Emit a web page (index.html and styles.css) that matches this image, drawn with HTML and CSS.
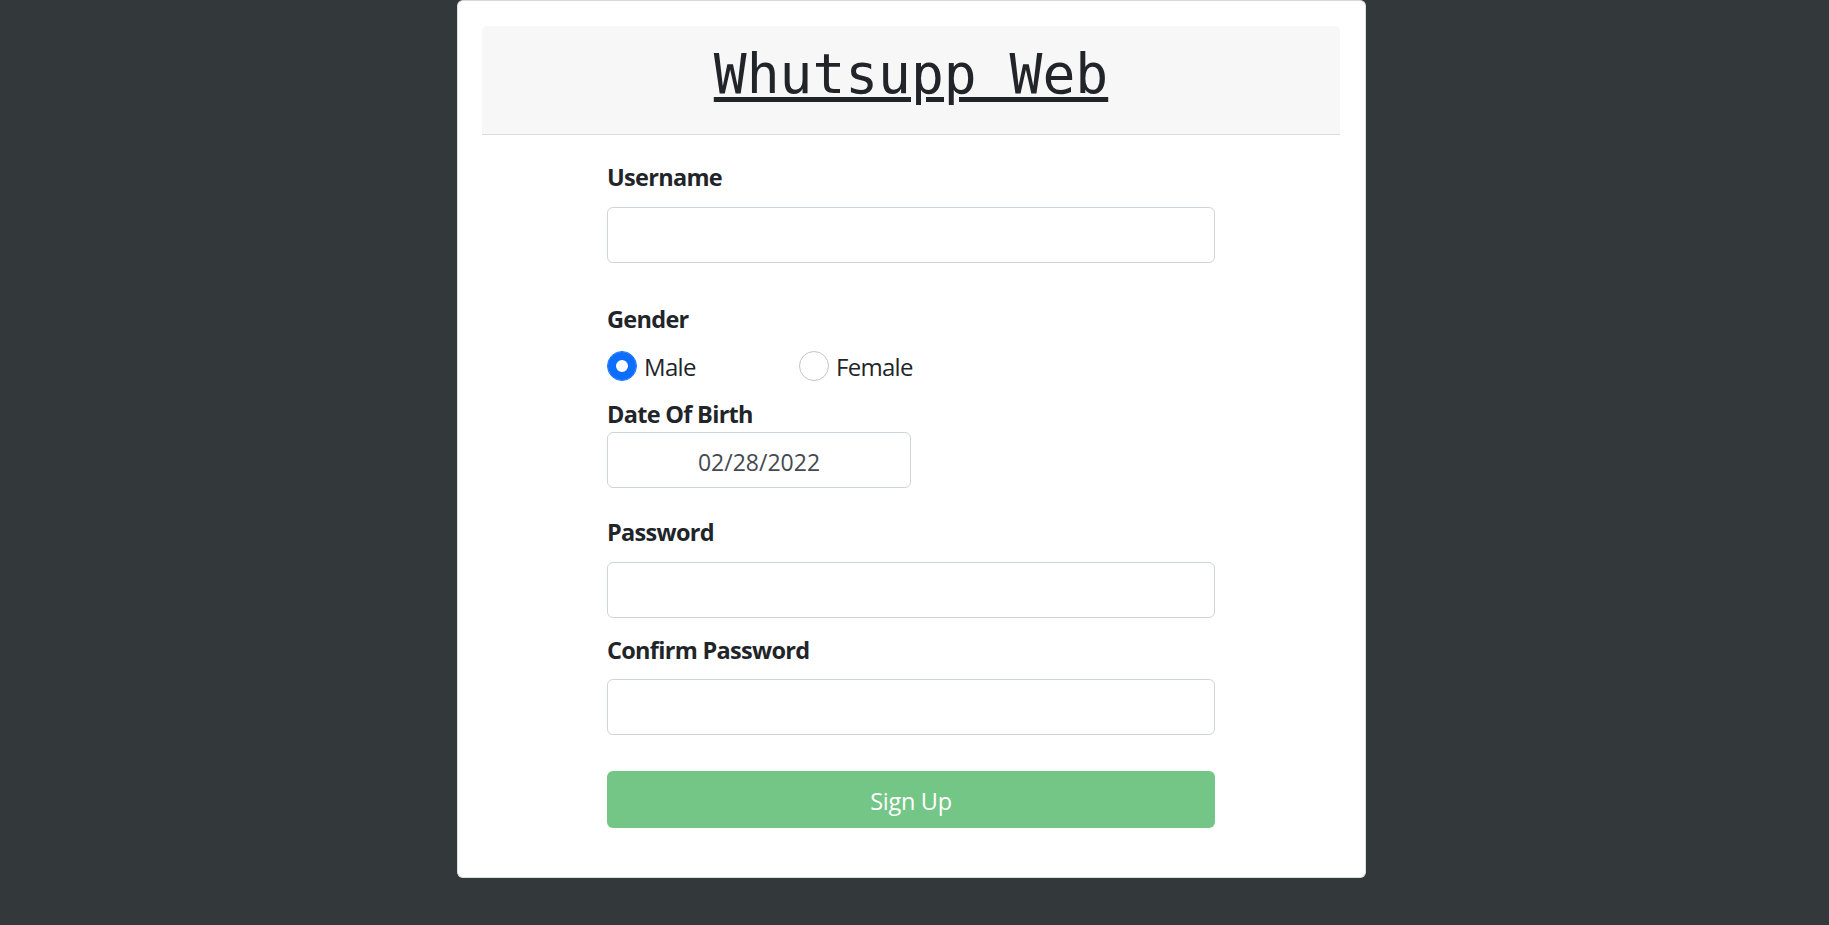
FILE: index.html
```html
<!DOCTYPE html>
<html lang="en">
<head>
<meta charset="utf-8">
<title>Whutsupp Web - Sign Up</title>
<link rel="stylesheet" href="styles.css">
</head>
<body>
<div class="page">
  <div class="card">
    <div class="card-header">
      <h1 class="title">Whutsupp Web</h1>
    </div>
    <form class="form">
      <div class="field field-username">
        <label class="label" for="username">Username</label>
        <input class="input" id="username" type="text">
      </div>
      <div class="field field-gender">
        <div class="label">Gender</div>
        <div class="radios">
          <label class="radio-option radio-male">
            <input class="radio" type="radio" name="gender" checked>
            <span class="radio-text">Male</span>
          </label>
          <label class="radio-option">
            <input class="radio" type="radio" name="gender">
            <span class="radio-text">Female</span>
          </label>
        </div>
      </div>
      <div class="field field-dob">
        <label class="label label-tight" for="dob">Date Of Birth</label>
        <input class="input input-date" id="dob" type="text" value="02/28/2022">
      </div>
      <div class="field field-password">
        <label class="label" for="password">Password</label>
        <input class="input" id="password" type="password">
      </div>
      <div class="field field-confirm">
        <label class="label label-confirm" for="confirm">Confirm Password</label>
        <input class="input" id="confirm" type="password">
      </div>
      <button class="btn-signup" type="button">Sign Up</button>
    </form>
  </div>
</div>
</body>
</html>
```

FILE: styles.css
```css
html, body {
  margin: 0;
  padding: 0;
}

body {
  background: #33383b;
  font-family: "Segoe UI", "Open Sans", "Noto Sans", sans-serif;
  color: #212529;
  min-height: 925px;
}

.page {
  display: flex;
  justify-content: center;
  padding-right: 6px;
}

.card {
  box-sizing: border-box;
  width: 909px;
  background: #ffffff;
  border: 1px solid #dedede;
  border-top-color: #d8d8d8;
  border-radius: 6px;
  padding: 25px 25px 49px 24px;
}

.card-header {
  background: #f7f7f7;
  border-bottom: 1px solid #dcdcdc;
  border-radius: 5px 5px 0 0;
  padding: 15px 0 27px 0;
  text-align: center;
}

.title {
  margin: 0;
  font-family: "DejaVu Sans Mono", "Liberation Mono", monospace;
  font-weight: normal;
  font-size: 54.6px;
  line-height: 66px;
  color: #212529;
  text-decoration: underline;
  text-decoration-thickness: 5px;
  text-underline-offset: 4px;
}

.form {
  width: 608px;
  margin: 0 auto;
  display: flex;
  flex-direction: column;
}

.field {
  display: flex;
  flex-direction: column;
}

.field-username { margin-top: 24px; }
.field-gender { margin-top: 38px; }
.field-dob { margin-top: 12px; }
.field-password { margin-top: 26px; }
.field-confirm { margin-top: 14px; }

.label {
  font-weight: 700;
  font-size: 23.5px;
  letter-spacing: -0.7px;
  line-height: 36px;
  height: 36px;
  margin-bottom: 12px;
}

.label-tight {
  margin-bottom: 0;
}

.label-confirm {
  margin-bottom: 11px;
}

.field-gender .label {
  margin-bottom: 11px;
}

.input {
  box-sizing: border-box;
  height: 56px;
  width: 608px;
  border: 1px solid #ced4da;
  border-radius: 6px;
  background: #ffffff;
  padding: 0 18px;
  font-family: "Segoe UI", "Open Sans", "Noto Sans", sans-serif;
  font-size: 24px;
  color: #495057;
  outline: none;
}

.input-date {
  width: 304px;
  text-align: center;
  font-size: 23px;
  color: #454a4f;
  padding: 4px 10px 0 10px;
}

.radios {
  display: flex;
  align-items: center;
  height: 36px;
}

.radio-option {
  display: flex;
  align-items: center;
  gap: 7px;
  font-size: 24px;
  line-height: 36px;
}

.radio-male {
  width: 192px;
}

.radio {
  appearance: none;
  -webkit-appearance: none;
  margin: 0;
  width: 30px;
  height: 30px;
  border-radius: 50%;
  border: 1px solid #c4c4c4;
  background: #ffffff;
  flex: none;
}

.radio:checked {
  border-color: #0d6efd;
  background: #ffffff;
  box-shadow: inset 0 0 0 8px #0d6efd;
}

.radio-text {
  color: #212529;
  letter-spacing: -0.7px;
  padding-top: 2px;
}

.btn-signup {
  margin-top: 36px;
  height: 57px;
  width: 608px;
  border: none;
  border-radius: 6px;
  background: #74c687;
  color: #ffffff;
  font-family: "Segoe UI", "Open Sans", "Noto Sans", sans-serif;
  font-size: 23.5px;
  letter-spacing: -0.3px;
  padding: 3px 0 0 0;
}
```
